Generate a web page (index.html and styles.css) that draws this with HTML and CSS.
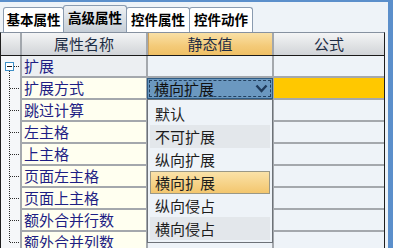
FILE: index.html
```html
<!DOCTYPE html>
<html lang="zh-CN">
<head>
  <meta charset="UTF-8" />
  <title>高级属性</title>
  <link rel="stylesheet" href="styles.css">
</head>
<body>
  <div class="window">

    <div class="tabs">
      <div class="tab">基本属性</div>
      <div class="tab active">高级属性</div>
      <div class="tab">控件属性</div>
      <div class="tab">控件动作</div>
    </div>

    <div class="sheet">
      <div class="head">
        <div class="hcell"></div>
        <div class="hcell name">属性名称</div>
        <div class="hcell value">静态值</div>
        <div class="hcell">公式</div>
      </div>

      <div class="body">
        <div class="tree">
          <svg width="19" height="196" viewBox="0 0 19 196">
            <g stroke="#2b2b2b" stroke-width="1" stroke-dasharray="1 1" fill="none">
              <line x1="8.5" y1="15" x2="8.5" y2="186" />
              <line x1="13" y1="10.5" x2="19" y2="10.5" />
              <line x1="9" y1="32.5" x2="19" y2="32.5" />
              <line x1="9" y1="54.5" x2="19" y2="54.5" />
              <line x1="9" y1="76.5" x2="19" y2="76.5" />
              <line x1="9" y1="98.5" x2="19" y2="98.5" />
              <line x1="9" y1="120.5" x2="19" y2="120.5" />
              <line x1="9" y1="142.5" x2="19" y2="142.5" />
              <line x1="9" y1="164.5" x2="19" y2="164.5" />
              <line x1="9" y1="186.5" x2="19" y2="186.5" />
            </g>
            <rect x="4.5" y="6.5" width="8" height="8" fill="#fff" stroke="#3d8fc6" />
            <line x1="6" y1="10.5" x2="11" y2="10.5" stroke="#1a1a1a" />
          </svg>
        </div>

        <div class="key group">扩展</div>
        <div class="val"></div>
        <div class="val"></div>

        <div class="key">扩展方式</div>
        <div class="val">
          <div class="combo">
            <div class="focus">
              <span>横向扩展</span>
              <svg width="13" height="9" viewBox="0 0 13 9">
                <polyline points="1.5,1.5 6.5,7 11.5,1.5" fill="none" stroke="#1f3a5a" stroke-width="2.4" />
              </svg>
            </div>
          </div>
        </div>
        <div class="val hot"></div>

        <div class="key">跳过计算</div>
        <div class="val"></div>
        <div class="val"></div>

        <div class="key">左主格</div>
        <div class="val"></div>
        <div class="val"></div>

        <div class="key">上主格</div>
        <div class="val"></div>
        <div class="val"></div>

        <div class="key">页面左主格</div>
        <div class="val"></div>
        <div class="val"></div>

        <div class="key">页面上主格</div>
        <div class="val"></div>
        <div class="val"></div>

        <div class="key">额外合并行数</div>
        <div class="val"></div>
        <div class="val"></div>

        <div class="key">额外合并列数</div>
        <div class="val"></div>
        <div class="val"></div>
      </div>

      <div class="dropdown">
        <div class="item">默认</div>
        <div class="item alt">不可扩展</div>
        <div class="item">纵向扩展</div>
        <div class="item sel">横向扩展</div>
        <div class="item">纵向侵占</div>
        <div class="item alt">横向侵占</div>
      </div>
    </div>

  </div>
</body>
</html>
```

FILE: styles.css
```css
* {
  margin: 0;
  padding: 0;
  box-sizing: border-box;
}
html, body {
  width: 100%;
  height: 100%;
  background: #eef3f8;
  font-family: "Noto Sans CJK SC", "Noto Sans", sans-serif;
  overflow: hidden;
}
.window {
  width: 393px;
  height: 248px;
  border-top: 2px solid #5b8fcb;
  border-right: 5px solid #5b8fcb;
  padding-right: 3px;
  background: #eef3f8;
}

/* tabs */
.tabs {
  display: flex;
  align-items: flex-end;
  height: 30px;
  padding-left: 3px;
}
.tab {
  width: 64px;
  height: 25px;
  margin-left: -1px;
  border: 1px solid #8a9bb0;
  border-bottom: none;
  border-radius: 3px 3px 0 0;
  background: #fff;
  color: #000;
  font-size: 13.5px;
  font-weight: 700;
  line-height: 23px;
  text-align: center;
}
.tab:first-child {
  width: 61px;
  margin-left: 0;
}
.tab.active {
  height: 27px;
  position: relative;
  z-index: 1;
  background: linear-gradient(#eef1f4, #d6dce2 60%, #c6ced7);
}

/* grid */
.sheet {
  position: relative;
  height: 216px;
  border: 1px solid #1e1e1e;
  border-top-color: #8691a0;
  border-bottom: none;
  overflow: hidden;
}
.head {
  display: grid;
  grid-template-columns: 19px 124px 124px 110px;
  column-gap: 2px;
  height: 23px;
  background: #a2a7ad;
  border-bottom: 1px solid #1a1a1a;
}
.hcell {
  background: linear-gradient(#f4f5f6, #e2e4e6 50%, #d1d4d8);
  color: #1d2c44;
  font-size: 15px;
  line-height: 22px;
  text-align: center;
}
.hcell.value {
  background: linear-gradient(#f9e0a6, #f4ca78 60%, #efc066);
  box-shadow: inset 1px 0 0 #cfa25a;
}
.body {
  display: grid;
  grid-template-columns: 19px 124px 124px 110px;
  grid-auto-rows: 20px;
  gap: 2px;
  height: 192px;
  background: #a4a8ad;
  overflow: hidden;
}
.tree {
  grid-row: 1 / span 9;
  background: #f5f7f9;
}
.tree svg {
  display: block;
}
.key {
  background: #fffff0;
  color: #1e1e84;
  font-size: 15px;
  line-height: 20px;
  padding-left: 2px;
  white-space: nowrap;
}
.key.group {
  background: #eceff2;
}
.val {
  background: #eef3f8;
}
.val.hot {
  background: #ffc800;
}

/* open combo box */
.combo {
  height: 21px;
  margin: 0 -1px;
  padding: 1px;
  border: 1px solid #2e5c85;
  background: #6b98c0;
}
.focus {
  display: flex;
  align-items: center;
  justify-content: space-between;
  height: 100%;
  padding: 0 2px 0 4px;
  border: 1px dashed #23405f;
  color: #111;
  font-size: 15px;
  line-height: 17px;
}
.focus svg {
  display: block;
}
.dropdown {
  position: absolute;
  left: 146px;
  top: 66px;
  width: 126px;
  padding: 2px;
  border: 1px solid #6d7278;
  background: #eef3f8;
  z-index: 5;
}
.item {
  height: 23px;
  padding-left: 5px;
  color: #1c1c1c;
  font-size: 15px;
  line-height: 23px;
}
.item.alt {
  background: #e3e7eb;
}
.item.sel {
  padding-left: 4px;
  border: 1px solid #9a9886;
  line-height: 21px;
  background: linear-gradient(#fae2a8, #f3c66e);
}
```
